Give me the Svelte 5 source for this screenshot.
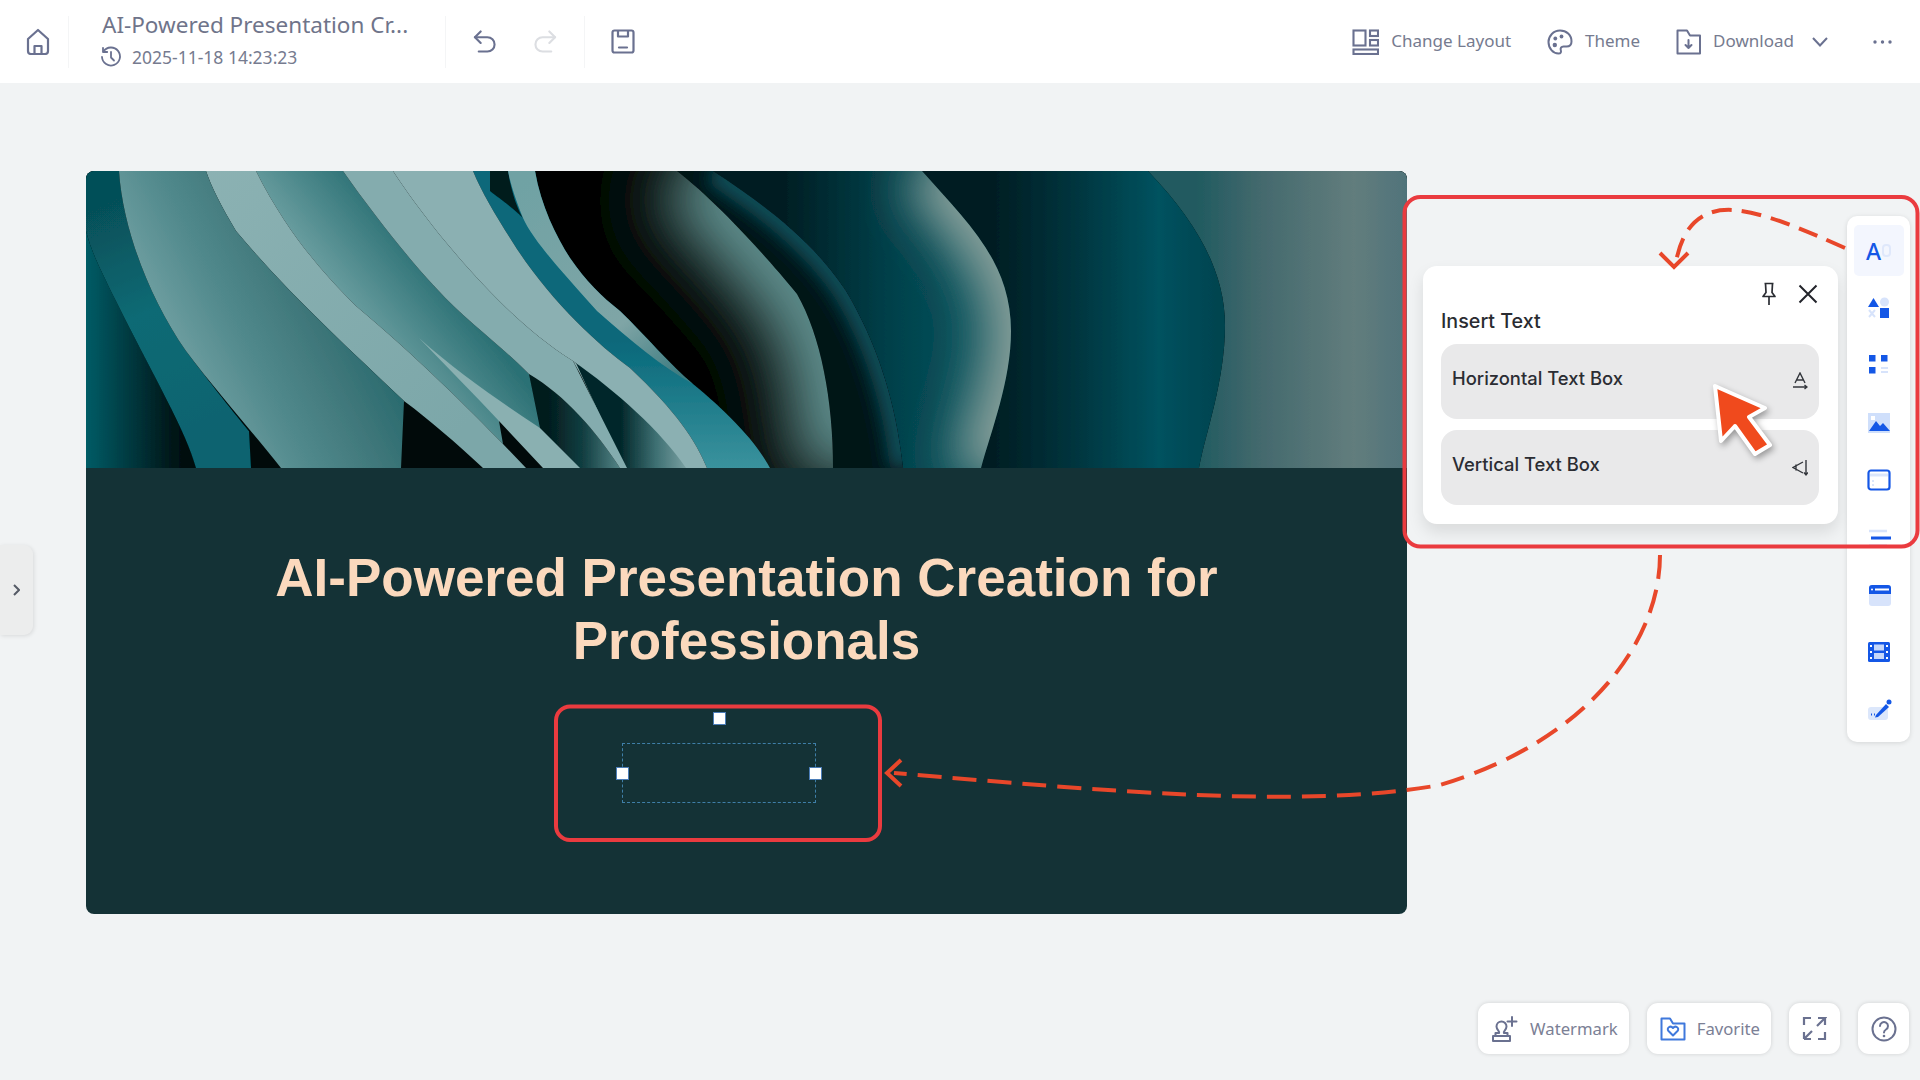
<script>
  const sideIcons = ['shapes','grid','image','table','lines','banner','film','sign'];
</script>

<div class="app">
  <header class="topbar">
    <div class="group home">
      <svg width="24" height="27" viewBox="0 0 24 27" fill="none" stroke="#6a7190" stroke-width="2.2" stroke-linejoin="round"><path d="M2 11 12 2l10 9v12a3 3 0 0 1-3 3H5a3 3 0 0 1-3-3z"/><path d="M8.500 26v-8h7v8"/></svg>
    </div>
    <div class="group info">
      <div class="title">AI-Powered Presentation Cr...</div>
      <div class="date">
        <svg width="22" height="22" viewBox="0 0 22 22" fill="none" stroke="#6a7190" stroke-width="1.800" stroke-linecap="round" stroke-linejoin="round"><path d="M3.500 5.500A9 9 0 1 1 2 11"/><path d="M3 1.800v4.200h4.200"/><path d="M11 6v5.500l3 3"/></svg>
        <span>2025-11-18 14:23:23</span>
      </div>
    </div>
    <div class="group history">
      <svg width="24" height="23" viewBox="0 0 24 23" fill="none" stroke="#6a7190" stroke-width="2.200" stroke-linecap="round" stroke-linejoin="round"><path d="M8 1 2 7l6 6"/><path d="M2 7h13a7.500 7.500 0 0 1 0 15H6"/></svg>
      <svg width="24" height="23" viewBox="0 0 24 23" fill="none" stroke="#dcdee2" stroke-width="2.200" stroke-linecap="round" stroke-linejoin="round"><path d="m16 1 6 6-6 6"/><path d="M22 7H9a7.500 7.500 0 0 0 0 15h9"/></svg>
    </div>
    <div class="group save">
      <svg width="24" height="25" viewBox="0 0 24 25" fill="none" stroke="#6a7190" stroke-width="2.200" stroke-linejoin="round"><rect x="1.500" y="1.500" width="21" height="22" rx="2"/><path d="M7 1.500v6h10v-6"/><path d="M8 18.500h8" stroke-linecap="round"/></svg>
    </div>

    <div class="actions">
      <button class="tool">
        <svg width="27" height="26" viewBox="0 0 27 26" fill="none" stroke="#6a7190" stroke-width="2.100"><rect x="1.500" y="1.500" width="12" height="15"/><rect x="18" y="1.500" width="8" height="5.500"/><rect x="18" y="11" width="8" height="5.500"/><rect x="1.500" y="20.500" width="24.500" height="4.500"/></svg>
        <span>Change Layout</span>
      </button>
      <button class="tool">
        <svg width="26" height="26" viewBox="0 0 26 26" fill="none" stroke="#6a7190" stroke-width="2"><path d="M13 1.500C6.500 1.500 1.500 6.800 1.500 13S6 24.500 11.500 24.500c2.500 0 2.800-1.700 2.300-3.200-.7-2 .4-3.800 2.700-3.800h3c3.200 0 5-2 5-5C24.500 6 19.500 1.500 13 1.500z"/><circle cx="8.300" cy="9.500" r="1.900" fill="#6a7190" stroke="none"/><circle cx="14.500" cy="7.500" r="1.900" fill="#6a7190" stroke="none"/><circle cx="7.800" cy="16" r="2.200" fill="#6a7190" stroke="none"/></svg>
        <span>Theme</span>
      </button>
      <button class="tool dl">
        <svg width="25" height="26" viewBox="0 0 25 26" fill="none" stroke="#6a7190" stroke-width="2" stroke-linejoin="round"><path d="M1.500 24.500V1.500H11l3 5h10v18z"/><path d="M12.500 11v8M9.500 16l3 3 3-3" stroke-linecap="round"/></svg>
        <span>Download</span>
      </button>
      <svg class="chev" width="16" height="10" viewBox="0 0 16 10" fill="none" stroke="#6a7190" stroke-width="2"><path d="m1 1 7 7.500L15 1"/></svg>
      <svg class="dots" width="19" height="4" viewBox="0 0 19 4" fill="#6a7190"><circle cx="2" cy="2" r="1.700"/><circle cx="9.500" cy="2" r="1.700"/><circle cx="17" cy="2" r="1.700"/></svg>
    </div>
  </header>

  <main class="stage">
    <div class="tab"><svg width="7" height="12" viewBox="0 0 7 12" fill="none" stroke="#555b66" stroke-width="2"><path d="m1 1 5 5-5 5"/></svg></div>

    <section class="slide">
      <svg class="photo" viewBox="0 0 1321 297">
        <defs>
          <linearGradient id="gP" gradientUnits="userSpaceOnUse" x1="1110" x2="1321" y1="0" y2="0"><stop offset="0" stop-color="#205a60"/><stop offset=".3" stop-color="#43696d"/><stop offset=".75" stop-color="#627d7d"/><stop offset="1" stop-color="#50737a"/></linearGradient>
          <linearGradient id="gD" gradientUnits="userSpaceOnUse" x1="900" x2="1130" y1="0" y2="0"><stop offset="0" stop-color="#011c21"/><stop offset=".35" stop-color="#01323b"/><stop offset=".75" stop-color="#00525f"/><stop offset="1" stop-color="#004450"/></linearGradient>
          <linearGradient id="gC" gradientUnits="userSpaceOnUse" x1="700" x2="920" y1="0" y2="0"><stop offset="0" stop-color="#021f24"/><stop offset=".5" stop-color="#03424c"/><stop offset=".8" stop-color="#07505a"/></linearGradient>
          <linearGradient id="gT" gradientUnits="userSpaceOnUse" x1="0" x2="0" y1="170" y2="297"><stop offset="0" stop-color="#07687a"/><stop offset="1" stop-color="#3a929d"/></linearGradient>
          <linearGradient id="gL" gradientUnits="userSpaceOnUse" x1="440" x2="600" y1="0" y2="200"><stop offset="0" stop-color="#6fa2a4"/><stop offset=".7" stop-color="#7fa5a6"/><stop offset="1" stop-color="#3d7b80"/></linearGradient>
          <linearGradient id="gW3" gradientUnits="userSpaceOnUse" x1="535" x2="612" y1="0" y2="0"><stop offset="0" stop-color="#02282b"/><stop offset=".45" stop-color="#3d6f72"/><stop offset="1" stop-color="#90b2b3"/></linearGradient>
          <linearGradient id="gW2" gradientUnits="userSpaceOnUse" x1="460" x2="535" y1="0" y2="0"><stop offset="0" stop-color="#011a1c"/><stop offset=".5" stop-color="#123f42"/><stop offset="1" stop-color="#558587"/></linearGradient>
          <linearGradient id="gE" gradientUnits="userSpaceOnUse" x1="205" x2="305" y1="125" y2="45"><stop offset="0" stop-color="#83acae"/><stop offset=".35" stop-color="#659a9c"/><stop offset="1" stop-color="#2c7175"/></linearGradient>
          <linearGradient id="gM" gradientUnits="userSpaceOnUse" x1="45" x2="220" y1="130" y2="40"><stop offset="0" stop-color="#76a4a6"/><stop offset=".4" stop-color="#528a8d"/><stop offset=".75" stop-color="#3f777a"/><stop offset="1" stop-color="#2a6b6f"/></linearGradient>
          <linearGradient id="gS" gradientUnits="userSpaceOnUse" x1="0" x2="340" y1="0" y2="300"><stop offset="0" stop-color="#8fb4b5"/><stop offset="1" stop-color="#7ca7a9"/></linearGradient>
          <linearGradient id="gTeal" gradientUnits="userSpaceOnUse" x1="0" x2="100" y1="40" y2="280"><stop offset="0" stop-color="#064f58"/><stop offset=".45" stop-color="#0a6a74"/><stop offset="1" stop-color="#076370"/></linearGradient>
          <linearGradient id="gLeft" gradientUnits="userSpaceOnUse" x1="0" x2="100" y1="0" y2="0"><stop offset="0" stop-color="#045c66"/><stop offset=".5" stop-color="#02343a"/><stop offset="1" stop-color="#010c0c"/></linearGradient>
          <filter id="b22" filterUnits="userSpaceOnUse" x="0" y="-60" width="1321" height="420"><feGaussianBlur stdDeviation="32"/></filter>
          <filter id="b12" filterUnits="userSpaceOnUse" x="0" y="-60" width="1321" height="420"><feGaussianBlur stdDeviation="24"/></filter>
          <filter id="b7" filterUnits="userSpaceOnUse" x="0" y="-60" width="1321" height="420"><feGaussianBlur stdDeviation="9"/></filter>
          <filter id="soft" filterUnits="userSpaceOnUse" x="0" y="-60" width="1321" height="420"><feGaussianBlur stdDeviation=".7"/></filter>
          <clipPath id="cC"><path d="M627 0C680 35 727 70 760 120 790 170 810 230 817 297H895C905 260 925 210 925 160 925 90 880 50 836 0Z"/></clipPath>
          <clipPath id="cB"><path d="M591 0C630 30 680 85 711 123 735 165 747 230 747 297H817C810 230 790 170 760 120 727 70 680 35 627 0Z"/></clipPath>
          <clipPath id="cR"><path d="M449 0C455 35 470 65 484 87 500 110 515 125 534 140 560 165 585 195 607 213 640 240 670 270 684 297H747C747 230 735 165 711 123 680 85 630 30 591 0Z"/></clipPath>
        </defs>
        <rect width="1321" height="297" fill="#010a0a"/>
        <g filter="url(#soft)">
          <path d="M1062 0C1110 50 1139 100 1139 154 1139 210 1120 260 1113 297H1321V0Z" fill="url(#gP)"/>
          <path d="M836 0C880 50 925 90 925 160 925 210 905 260 895 297H1113C1120 260 1139 210 1139 154 1139 100 1110 50 1062 0Z" fill="url(#gD)"/>
          <g clip-path="url(#cC)">
            <rect x="620" width="310" height="297" fill="url(#gC)"/>
            <path d="M846 -10C895 45 940 90 940 160 940 215 915 260 905 307" fill="none" stroke="#88a09b" stroke-width="80" filter="url(#b12)"/>
          </g>
          <g clip-path="url(#cB)">
            <rect x="590" width="230" height="297" fill="#011418"/>
            <path d="M627 0C680 35 727 70 760 120 790 170 810 230 817 297" fill="none" stroke="#0a4f5a" stroke-width="26" filter="url(#b7)"/>
          </g>
          <g clip-path="url(#cR)">
            <rect x="440" width="310" height="297" fill="#000503"/>
            <path d="M603 -10C642 24 695 85 726 123 750 165 762 230 762 307" fill="none" stroke="#60908f" stroke-width="110" filter="url(#b22)"/>
          </g>
          <path d="M0 60C5 80 15 100 30 130 70 210 100 260 110 297H0Z" fill="url(#gLeft)"/>
          <path d="M387 0H449C455 35 470 65 484 87 500 110 515 125 534 140 560 165 585 195 607 213 640 240 670 270 684 297H621C610 270 590 240 544 197 511 173 461 127 424 67 410 45 395 20 387 0Z" fill="url(#gT)"/>
          <path d="M404 0H422C425 20 432 40 437 47 425 35 410 25 404 20Z" fill="#011a1c"/>
          <path d="M422 0H449C455 35 470 65 484 87 500 110 515 125 534 140 560 165 585 195 607 213 575 195 545 170 511 140 480 105 447 70 437 47 430 30 425 15 422 0Z" fill="url(#gL)"/>
          <path d="M487 190C520 215 555 260 575 297H534C520 260 505 220 487 190Z" fill="#8ab0b1"/>
          <path d="M490 192C530 220 590 250 612 297H538Z" fill="url(#gW3)"/>
          <path d="M443 203C480 225 510 260 534 297H457L454 257Z" fill="url(#gW2)"/>
          <path d="M170 0H257C285 40 320 85 350 117 380 150 410 170 443 203L454 257 413 250 417 273C385 240 330 185 270 135 235 100 200 60 170 0Z" fill="url(#gE)"/>
          <path d="M120 0H170C200 60 235 100 270 135 330 185 385 240 417 273L440 297H397C370 272 345 250 318 230 260 175 200 120 150 60 135 35 125 15 120 0Z" fill="url(#gS)"/>
          <path d="M333 167C370 200 410 228 454 257L494 297H457L413 250C390 225 360 195 333 167Z" fill="#8ab0b1"/>
          <path d="M257 0H307C320 20 335 40 353 63 400 120 440 160 487 190L541 297H534C510 260 480 225 443 203 410 170 380 150 350 117 320 85 285 40 257 0Z" fill="#84acae"/>
          <path d="M307 0H387C395 20 410 45 424 67 461 127 511 173 544 197 590 240 610 270 621 297H600C575 260 530 220 487 190 440 160 400 120 353 63 335 40 320 20 307 0Z" fill="#8bb0b2"/>
          <path d="M0 0H33C37 60 65 130 100 180 130 220 163 260 163 260L165 297H110C100 260 70 210 30 130 15 100 5 80 0 60Z" fill="url(#gTeal)"/>
          <path d="M33 0H120C125 15 135 35 150 60 200 120 260 175 318 230L315 297H195C170 265 130 220 100 180 65 130 37 60 33 0Z" fill="url(#gM)"/>
        </g>
      </svg>
      <div class="slide-body">
        <h1>AI-Powered Presentation Creation for Professionals</h1>
        <div class="selection">
          <i class="handle top"></i><i class="handle left"></i><i class="handle right"></i>
        </div>
      </div>
    </section>

    <div class="foot">
      <button class="chip">
        <svg width="28" height="28" viewBox="0 0 28 28" fill="none" stroke="#6a7190" stroke-width="2" stroke-linejoin="round"><path d="M2 21h17v5H2zM4.500 21v-3h3.500c1-2-2.500-3-2.500-6.500a5 5 0 0 1 10 0c0 3.500-3.500 4.500-2.500 6.500h3.500v3"/><path d="M21 2v9M16.500 6.500h9" stroke-linecap="round"/></svg>
        <span>Watermark</span>
      </button>
      <button class="chip">
        <svg class="fav" width="26" height="24" viewBox="0 0 26 24" fill="none" stroke="#3f78dc" stroke-width="2" stroke-linejoin="round"><path d="M1.500 22.500V1.500H10l3 5h11.500v16z"/><path d="M13 18.500l-4.500-4.500c-2.500-3 2-6 4.500-3 2.500-3 7 0 4.500 3z"/></svg>
        <span>Favorite</span>
      </button>
      <button class="chip square">
        <svg width="25" height="25" viewBox="0 0 25 25" fill="none" stroke="#6a7190" stroke-width="2.200"><path d="M9 2H2v7M2 23v-7M23 16v7h-7M16 2h7l-8 8M23 2v7M2 23h7M2 23l8-8"/></svg>
      </button>
      <button class="chip square">
        <svg width="26" height="26" viewBox="0 0 26 26" fill="none" stroke="#6a7190" stroke-width="2"><circle cx="13" cy="13" r="11.500"/><path d="M9 10a4 4 0 1 1 6 3.500c-1.400.8-2 1.500-2 3" stroke-linecap="round"/><circle cx="13" cy="20" r="1.300" fill="#6a7190" stroke="none"/></svg>
      </button>
    </div>

    <div class="popup">
      <div class="popup-head">
        <svg width="16" height="24" viewBox="0 0 16 24" fill="none" stroke="#2b2d33" stroke-width="1.700" stroke-linejoin="round"><path d="M3.500 1.500h9M4.500 1.500l.5 9-3 4h12l-3-4 .5-9M8 14.500V23"/></svg>
        <svg width="20" height="20" viewBox="0 0 20 20" fill="none" stroke="#22242a" stroke-width="2"><path d="m1.500 1.500 17 17M18.500 1.500l-17 17"/></svg>
      </div>
      <div class="popup-title">Insert Text</div>
      <div class="row">
        <span>Horizontal Text Box</span>
        <svg width="16" height="18" viewBox="0 0 16 18" fill="none" stroke="#33363c" stroke-width="1.400"><path d="m3 11 5-10 5 10M4.700 8h6.600"/><path d="M1 15h14M12.500 13l2.500 2-2.500 2"/></svg>
      </div>
      <div class="row">
        <span>Vertical Text Box</span>
        <svg class="v" width="16" height="18" viewBox="0 0 16 18" fill="none" stroke="#33363c" stroke-width="1.400"><path d="M11 3 1 8.500 11 14M4 5.500v6"/><path d="M14 1v15M12 13.500l2 2.500 2-2.500"/></svg>
      </div>
    </div>

    <nav class="rail">
      <div class="rail-item active"><span class="rail-a">A</span><svg width="9" height="13" viewBox="0 0 9 13" fill="none" stroke="#dfe8fb" stroke-width="2"><rect x="1" y="1" width="7" height="11" rx="3"/></svg></div>
      {#each sideIcons as name}
        <div class="rail-item">
          <svg width="26" height="26" viewBox="0 0 26 26">
            {#if name === 'shapes'}
              <path d="M2 12 7.500 3 13 12Z" fill="#1457e6"/><circle cx="18.500" cy="7" r="4.500" fill="#d7e3fb"/><rect x="14" y="13" width="9" height="10" fill="#1457e6"/><path d="m3 15 6 7M9 15l-6 7" stroke="#d7e3fb" stroke-width="2"/>
            {:else if name === 'grid'}
              <rect x="3" y="3" width="6.500" height="6.500" fill="#1457e6"/><rect x="15" y="3" width="6.500" height="6.500" fill="#1457e6"/><rect x="3" y="15" width="6.500" height="6.500" fill="#1457e6"/><path d="M15 16h7M15 20h7" stroke="#d7e3fb" stroke-width="2"/>
            {:else if name === 'image'}
              <rect x="2" y="3" width="22" height="20" fill="#cfdffb"/><path d="M3 21 10 11l4 5 3-3 7 8Z" fill="#1457e6"/><rect x="5" y="6" width="4" height="4" fill="#fff"/>
            {:else if name === 'table'}
              <rect x="2.500" y="3.500" width="21" height="19" rx="2.500" fill="#fff" stroke="#1457e6" stroke-width="2.200"/><path d="M4 8h18" stroke="#dbe6fb" stroke-width="3"/><path d="M6 14h2M6 18h2" stroke="#dbe6fb" stroke-width="2"/>
            {:else if name === 'lines'}
              <path d="M3 7h18" stroke="#d7e3fb" stroke-width="2.500"/><path d="M5 14h20" stroke="#1457e6" stroke-width="3"/><path d="M3 21h18" stroke="#e6edfc" stroke-width="2"/>
            {:else if name === 'banner'}
              <rect x="3" y="3" width="22" height="21" rx="3" fill="#d7e3fb"/><path d="M3 6a3 3 0 0 1 3-3h16a3 3 0 0 1 3 3v6H3Z" fill="#1457e6"/><path d="M9 7.500h14" stroke="#fff" stroke-width="2"/><circle cx="6" cy="7.500" r="1" fill="#fff"/>
            {:else if name === 'film'}
              <rect x="2" y="3" width="22" height="20" rx="1.500" fill="#1457e6"/><rect x="8" y="5.500" width="10" height="6" fill="#c5d7fa"/><rect x="8" y="14" width="10" height="6" fill="#c5d7fa"/><g fill="#fff"><rect x="4" y="6" width="2" height="2"/><rect x="4" y="12" width="2" height="2"/><rect x="4" y="18" width="2" height="2"/><rect x="20" y="6" width="2" height="2"/><rect x="20" y="12" width="2" height="2"/><rect x="20" y="18" width="2" height="2"/></g>
            {:else}
              <rect x="2" y="10" width="20" height="13" rx="3" fill="#dce7fb"/><path d="M10 18 20 7l3 3-11 10-3 .5Z" fill="#1457e6"/><circle cx="23" cy="5" r="2.500" fill="#1457e6"/><path d="M5 17.500h1M8 17.500h1" stroke="#1457e6" stroke-width="2"/>
            {/if}
          </svg>
        </div>
      {/each}
    </nav>
  </main>

  <svg class="marks" viewBox="0 0 1920 1080">
    <rect x="1404.500" y="197" width="513" height="349.500" rx="16" class="box"/>
    <rect x="556" y="706.500" width="324" height="133.500" rx="14" class="box"/>
    <path d="M1845 248C1800 228 1762 212 1733 210 1698 208 1682 230 1676 262" class="dash small"/>
    <path d="M1660 253 1674 267 1688 253" class="arrow"/>
    <path d="M1660 555C1660 640 1590 740 1440 785 1300 810 1100 790 894 773" class="dash"/>
    <path d="M901 760 887 773 901 786" class="arrow"/>
    <path d="M1715 386 1765 408 1749 417 1770 445 1755 454 1735 426 1721 441Z" class="cursor"/>
  </svg>
</div>

<style>
  :global(body) { margin: 0; background: #f1f3f4; }
  .app { position: relative; width: 1920px; height: 1080px; overflow: hidden; display: flex; flex-direction: column; background: #f1f3f4; font-family: "Noto Sans", sans-serif; }
  button { border: 0; background: none; padding: 0; font: inherit; color: inherit; }

  .topbar { height: 83px; flex: none; background: #fff; display: flex; align-items: center; color: #6f748a; }
  .group { height: 52px; display: flex; align-items: center; border-right: 1px solid #f4f5f6; box-sizing: border-box; }
  .home { width: 69px; padding-left: 26px; }
  .info { width: 377px; padding: 0 0 4px 33px; flex-direction: column; align-items: flex-start; justify-content: center; }
  .title { font-size: 22.500px; line-height: 30px; margin-bottom: 5px; white-space: nowrap; }
  .date { display: flex; align-items: center; gap: 10px; font-size: 17.500px; line-height: 24px; margin-left: -2px; color: #767b8f; }
  .history { padding: 0 27px; gap: 38px; width: 139px; }
  .save { border: 0; padding-left: 26px; }
  .actions { margin-left: auto; padding-right: 28px; display: flex; align-items: center; font-size: 17px; }
  .tool { display: flex; align-items: center; gap: 12px; margin-right: 36px; color: #767b8f; }
  .tool span { margin-top: -2px; }
  .tool.dl { margin-right: 18px; }
  .chev { margin-right: 45px; }

  .stage { position: relative; flex: 1; display: flex; flex-direction: column; align-items: flex-start; padding: 88px 11px 0 86px; }
  .tab { position: absolute; left: 0; top: 462px; width: 33px; height: 90px; background: #eceded; border-radius: 0 9px 9px 0; box-shadow: 1px 1px 4px rgba(0,0,0,.1); display: flex; align-items: center; justify-content: center; }
  .slide { width: 1321px; height: 743px; flex: none; border-radius: 8px; overflow: hidden; background: #143236; display: flex; flex-direction: column; position: relative; }
  .photo { width: 1321px; height: 297px; display: block; flex: none; }
  .slide-body { position: relative; flex: 1; }
  h1 { margin: 0; padding: 78px 130px 0; font: 700 53px/63px "Liberation Sans", Arial, sans-serif; color: #fbd9bd; text-align: center; }
  .selection { position: absolute; left: 536px; top: 275px; width: 192px; height: 58px; border: 1px dashed #3f7fa8; }
  .handle { position: absolute; width: 11px; height: 11px; background: #fff; border: 1px solid #4b7db8; }
  .handle.top { left: 90px; top: -32px; }
  .handle.left { left: -7px; top: 23px; }
  .handle.right { right: -7px; top: 23px; }

  .foot { align-self: flex-end; margin-top: 89px; display: flex; gap: 18px; }
  .chip { height: 51px; padding: 0 11px 0 13px; background: #fff; border-radius: 11px; box-shadow: 0 0 4px rgba(0,0,0,.14); display: flex; align-items: center; gap: 11px; font-size: 16.700px; color: #7b8095; }
  .chip.square { width: 51px; padding: 0; justify-content: center; }

  .popup { position: absolute; left: 1423px; top: 183px; width: 415px; height: 258px; box-sizing: border-box; padding: 16px 19px 0 18px; background: #fff; border-radius: 14px; box-shadow: 0 8px 16px rgba(0,0,0,.1); }
  .popup-head { display: flex; justify-content: flex-end; align-items: center; gap: 21px; height: 24px; margin-right: 1px; }
  .popup-title { font: 500 19.700px/28px Inter, sans-serif; color: #2a2c31; margin-top: 1px; margin-bottom: 9px; }
  .row { height: 75px; margin-bottom: 11px; background: #e9e9ea; border-radius: 16px; box-sizing: border-box; padding: 21px 11px 0 11px; display: flex; justify-content: space-between; font: 500 18.400px/26px Inter, sans-serif; color: #2b2d33; }
  .row svg { margin-top: 7px; }
  .row svg.v { margin-top: 8px; }

  .rail { position: absolute; left: 1847px; top: 133px; width: 63px; height: 526px; background: #fff; border-radius: 10px; box-shadow: 0 1px 5px rgba(0,0,0,.12); display: flex; flex-direction: column; align-items: center; padding-top: 9px; box-sizing: border-box; }
  .rail-item { width: 50px; height: 51px; flex: none; margin-bottom: 6.400px; border-radius: 5px; display: flex; align-items: center; justify-content: center; }
  .rail-item.active { background: #f3f6fe; gap: 1px; }
  .rail-a { font: 500 23px/26px "Noto Sans", sans-serif; color: #1457e6; }

  .marks { position: absolute; left: 0; top: 0; width: 1920px; height: 1080px; pointer-events: none; }
  .box { fill: none; stroke: #ea3b3f; stroke-width: 4; }
  .dash { fill: none; stroke: #e8472a; stroke-width: 4; stroke-dasharray: 24 11; }
  .dash.small { stroke-dasharray: 20 10; }
  .arrow { fill: none; stroke: #e8472a; stroke-width: 4; }
  .cursor { fill: #f04a1d; stroke: #fff; stroke-width: 4; stroke-linejoin: round; filter: drop-shadow(2px 3px 3px rgba(0,0,0,.35)); }
</style>
